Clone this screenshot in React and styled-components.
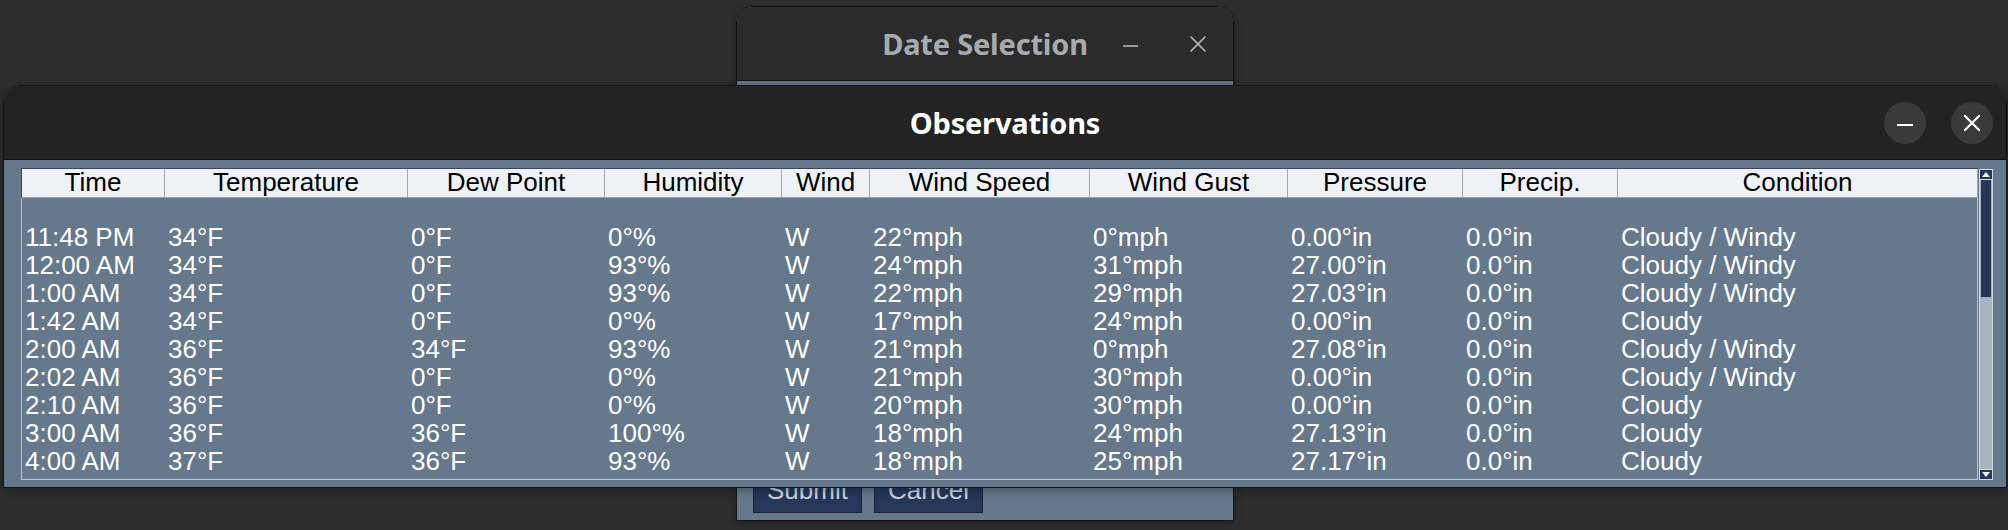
import React from 'react';
import styled, { createGlobalStyle } from 'styled-components';

const GlobalStyle = createGlobalStyle`
  html, body {
    margin: 0;
    padding: 0;
    background: #2e2e2e;
    overflow: hidden;
  }
  * {
    box-sizing: border-box;
  }
`;

const Desktop = styled.div`
  position: relative;
  width: 2008px;
  height: 530px;
  overflow: hidden;
  background: #2e2e2e;
  font-family: "Liberation Sans", Arial, sans-serif;
`;

// windows sit on a free desktop, so they are placed at their coordinates
const Window = styled.div`
  position: absolute;
  left: ${p => p.x}px;
  top: ${p => p.y}px;
  width: ${p => p.w}px;
  height: ${p => p.h}px;
  display: flex;
  flex-direction: column;
  border: 1px solid #141414;
  border-radius: 16px 16px 0 0;
  overflow: hidden;
  background: #66788c;
  box-shadow: 0 2px 10px rgba(0, 0, 0, 0.35);
`;

const TitleBar = styled.div`
  position: relative;
  flex: 0 0 ${p => p.height}px;
  display: flex;
  align-items: center;
  justify-content: center;
  background: ${p => (p.active ? '#232323' : '#2b2b2b')};
  border-bottom: 1px solid #121212;
`;

const Title = styled.div`
  font-family: "Noto Sans", "Open Sans", sans-serif;
  font-weight: 700;
  font-size: 29px;
  color: ${p => (p.active ? '#ffffff' : '#a7aaae')};
  letter-spacing: -0.2px;
`;

const Controls = styled.div`
  position: absolute;
  right: ${p => p.right}px;
  top: 0;
  bottom: 0;
  display: flex;
  align-items: center;
  gap: ${p => p.gap}px;
`;

const RoundButton = styled.div`
  width: 42px;
  height: 42px;
  border-radius: 50%;
  background: #3a3a3a;
  display: flex;
  align-items: center;
  justify-content: center;
`;

const PlainButton = styled.div`
  width: 16px;
  height: 16px;
  display: flex;
  align-items: center;
  justify-content: center;
`;

const DateContent = styled.div`
  flex: 1;
  display: flex;
  align-items: flex-end;
  background: #66788c;
  padding: 0 0 7px 16px;
`;

const ButtonRow = styled.div`
  display: flex;
  gap: 12px;
`;

const FormButton = styled.div`
  width: ${p => p.w}px;
  padding: 4px 0 8px;
  text-align: center;
  font-size: 26px;
  line-height: 28px;
  color: #c9d0d9;
  background: #27375a;
  border: 1px solid #17213a;
`;

const ObsContent = styled.div`
  flex: 1;
  display: flex;
  gap: 1px;
  padding: 8px 13px 7px 17px;
  background: #66788c;
`;

const TableArea = styled.div`
  width: 1957px;
  display: flex;
  flex-direction: column;
`;

const columns = '143px 243px 197px 177px 88px 220px 198px 175px 155px 360px';

const HeaderRow = styled.div`
  display: grid;
  grid-template-columns: ${columns};
  height: 30px;
  background: #eef2f7;
  border-top: 1px solid #3b4758;
  border-left: 1px solid #3b4758;
  border-bottom: 1px solid #9aa0a8;
`;

const HeaderCell = styled.div`
  text-align: center;
  font-size: 26px;
  line-height: 26px;
  color: #000;
  border-right: 1px solid #a2a8b0;
  white-space: nowrap;
`;

const Body = styled.div`
  height: 282px;
  padding-top: 25px;
  border-left: 1px solid #b9c2cd;
  border-right: 1px solid #b9c2cd;
  border-bottom: 1px solid #c3cad4;
`;

const DataRow = styled.div`
  display: grid;
  grid-template-columns: ${columns};
  height: 28px;
`;

const Cell = styled.div`
  padding-left: 3px;
  font-size: 26px;
  line-height: 28px;
  color: #ffffff;
  white-space: nowrap;
`;

const Scrollbar = styled.div`
  width: 14px;
  height: 311px;
  margin-top: 1px;
  display: flex;
  flex-direction: column;
  background: #a8b3c2;
  border: 1px solid #d3d9e1;
`;

const Arrow = styled.div`
  flex: 0 0 10px;
  display: flex;
  align-items: center;
  justify-content: center;
  background: #27375a;
  border-${p => (p.down ? 'top' : 'bottom')}: 1px solid #d3d9e1;
`;

const Thumb = styled.div`
  flex: 0 0 117px;
  background: #27375a;
  margin: 0 1px;
`;

const Trough = styled.div`
  flex: 1;
`;

const MinIcon = ({ color, width = 16, thick = 2 }) => (
  <svg width={width} height="16" viewBox={`0 0 ${width} 16`}>
    <rect x="0" y={10 - thick / 2} width={width} height={thick} fill={color} />
  </svg>
);

const CloseIcon = ({ color, stroke = 2.2 }) => (
  <svg width="16" height="16" viewBox="0 0 16 16">
    <path d="M1 1 L15 15 M15 1 L1 15" stroke={color} strokeWidth={stroke} strokeLinecap="round" />
  </svg>
);

const ArrowIcon = ({ down }) => (
  <svg width="8" height="5" viewBox="0 0 8 5">
    <polygon points={down ? '0,0 8,0 4,5' : '0,5 8,5 4,0'} fill="#ffffff" />
  </svg>
);

const headers = [
  'Time', 'Temperature', 'Dew Point', 'Humidity', 'Wind',
  'Wind Speed', 'Wind Gust', 'Pressure', 'Precip.', 'Condition',
];

const observations = [
  ['11:48 PM', '34°F', '0°F', '0°%', 'W', '22°mph', '0°mph', '0.00°in', '0.0°in', 'Cloudy / Windy'],
  ['12:00 AM', '34°F', '0°F', '93°%', 'W', '24°mph', '31°mph', '27.00°in', '0.0°in', 'Cloudy / Windy'],
  ['1:00 AM', '34°F', '0°F', '93°%', 'W', '22°mph', '29°mph', '27.03°in', '0.0°in', 'Cloudy / Windy'],
  ['1:42 AM', '34°F', '0°F', '0°%', 'W', '17°mph', '24°mph', '0.00°in', '0.0°in', 'Cloudy'],
  ['2:00 AM', '36°F', '34°F', '93°%', 'W', '21°mph', '0°mph', '27.08°in', '0.0°in', 'Cloudy / Windy'],
  ['2:02 AM', '36°F', '0°F', '0°%', 'W', '21°mph', '30°mph', '0.00°in', '0.0°in', 'Cloudy / Windy'],
  ['2:10 AM', '36°F', '0°F', '0°%', 'W', '20°mph', '30°mph', '0.00°in', '0.0°in', 'Cloudy'],
  ['3:00 AM', '36°F', '36°F', '100°%', 'W', '18°mph', '24°mph', '27.13°in', '0.0°in', 'Cloudy'],
  ['4:00 AM', '37°F', '36°F', '93°%', 'W', '18°mph', '25°mph', '27.17°in', '0.0°in', 'Cloudy'],
];

const App = () => (
  <Desktop>
    <GlobalStyle />

    {/* Date Selection dialog, behind */}
    <Window x={736} y={6} w={498} h={515}>
      <TitleBar height={74}>
        <Title>Date Selection</Title>
        <Controls right={27} gap={52}>
          <PlainButton>
            <MinIcon color="#b4b4b4" width={15} thick={1.6} />
          </PlainButton>
          <PlainButton>
            <CloseIcon color="#bdbdbd" stroke={1.6} />
          </PlainButton>
        </Controls>
      </TitleBar>
      <DateContent>
        <ButtonRow>
          <FormButton w={109}>Submit</FormButton>
          <FormButton w={109}>Cancel</FormButton>
        </ButtonRow>
      </DateContent>
    </Window>

    {/* Observations window, in front */}
    <Window x={3} y={85} w={2004} h={403}>
      <TitleBar active height={74}>
        <Title active>Observations</Title>
        <Controls right={13} gap={25}>
          <RoundButton>
            <MinIcon color="#ffffff" />
          </RoundButton>
          <RoundButton>
            <CloseIcon color="#ffffff" />
          </RoundButton>
        </Controls>
      </TitleBar>
      <ObsContent>
        <TableArea>
          <HeaderRow>
            {headers.map(h => (
              <HeaderCell key={h}>{h}</HeaderCell>
            ))}
          </HeaderRow>
          <Body>
            {observations.map((row, i) => (
              <DataRow key={i}>
                {row.map((v, j) => (
                  <Cell key={j}>{v}</Cell>
                ))}
              </DataRow>
            ))}
          </Body>
        </TableArea>
        <Scrollbar>
          <Arrow>
            <ArrowIcon />
          </Arrow>
          <Thumb />
          <Trough />
          <Arrow down>
            <ArrowIcon down />
          </Arrow>
        </Scrollbar>
      </ObsContent>
    </Window>
  </Desktop>
);

export default App;
